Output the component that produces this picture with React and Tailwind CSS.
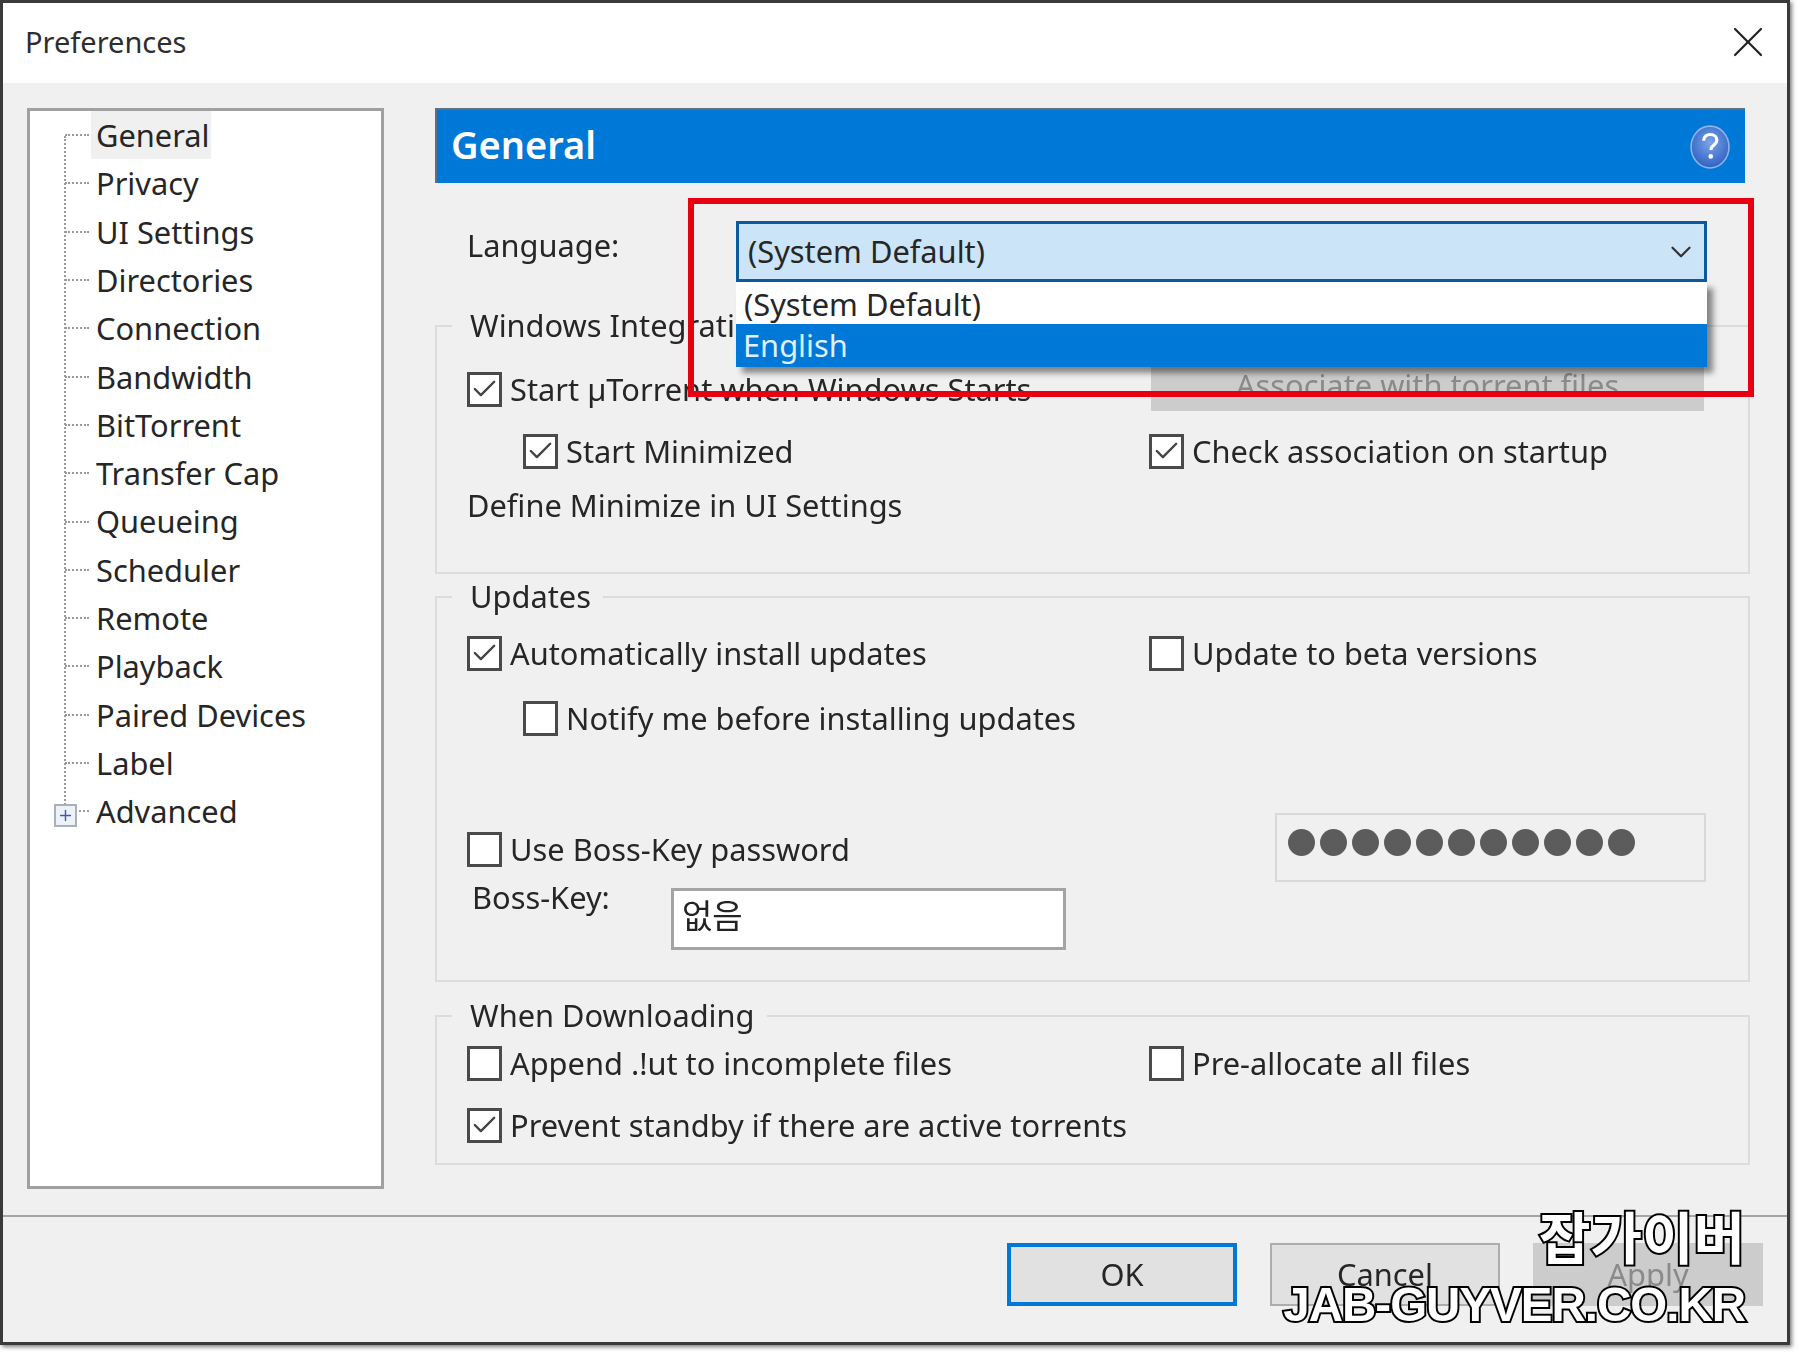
import React from 'react';
import { X, ChevronDown, Check, Plus } from 'lucide-react';

const treeItems = [
  'General', 'Privacy', 'UI Settings', 'Directories', 'Connection', 'Bandwidth', 'BitTorrent',
  'Transfer Cap', 'Queueing', 'Scheduler', 'Remote', 'Playback', 'Paired Devices', 'Label', 'Advanced',
];

const CheckBox = ({ checked }) => (
  <span className="flex w-[35px] h-[35px] shrink-0 items-center justify-center border-[3px] border-[#4a4a4a] bg-white">
    {checked && <Check size={30} strokeWidth={2} className="text-[#444]" />}
  </span>
);

const CheckRow = ({ checked, label, className = '' }) => (
  <div className={`flex items-center h-[34px] gap-[8px] ${className}`}>
    <CheckBox checked={checked} />
    <span className="whitespace-nowrap">{label}</span>
  </div>
);

const Group = ({ title, className, children }) => (
  <div className={`relative border-2 border-[#dcdcdc] ${className}`}>
    <span className="absolute left-[15px] -top-[22px] h-[40px] flex items-center bg-[#f0f0f0] pl-[18px] pr-[12px] whitespace-nowrap">
      {title}
    </span>
    {children}
  </div>
);

const Btn = ({ label, className = '' }) => (
  <div className={`flex items-center justify-center w-[230px] h-[63px] ${className}`}>{label}</div>
);

const HelpIcon = () => (
  <svg width="40" height="46" viewBox="0 0 38 44" preserveAspectRatio="none">
    <defs>
      <radialGradient id="helpBg" cx="50%" cy="40%" r="60%">
        <stop offset="0%" stopColor="#7ba4e8" />
        <stop offset="100%" stopColor="#2f62c4" />
      </radialGradient>
    </defs>
    <ellipse cx="19" cy="22" rx="18" ry="20" fill="url(#helpBg)" stroke="#8fb4ea" strokeWidth="1.5" />
    <path d="M13 16c0-4 3-6 6.5-6s6 2.4 6 5.4c0 3-2 4.2-3.6 5.4-1.4 1-2 2-2 4" fill="none" stroke="#fff" strokeWidth="3" />
    <circle cx="19.7" cy="31" r="2.2" fill="#fff" />
  </svg>
);

export default function App() {
  return (
    <div className="relative w-[1800px] h-[1355px] bg-white overflow-hidden font-['Noto_Sans','Noto_Sans_CJK_KR',sans-serif] text-[30.8px] text-[#262626]">
      <div className="w-[1790px] h-[1345px] border-[3px] border-[#3a3a3a] bg-[#f0f0f0] flex flex-col shadow-[2px_2px_4px_rgba(0,0,0,0.5)] blur-[0.7px]">
        {/* Title bar */}
        <div className="h-[80px] shrink-0 bg-white flex items-center justify-between pl-[22px] pr-[13px]">
          <span className="text-[29px] text-[#2e2e2e] -mt-[2px]">Preferences</span>
          <X size={52} strokeWidth={1} className="text-[#222] -mt-[2px]" />
        </div>

        {/* Body */}
        <div className="h-[1132px] shrink-0 flex pl-[24px] pt-[25px] gap-[51px]">
          {/* Tree */}
          <div className="relative w-[357px] h-[1081px] border-[3px] border-[#a0a0a0] bg-white">
            <div className="absolute left-[34px] top-[25px] h-[672px] border-l-2 border-dotted border-[#9a9a9a]" />
            {treeItems.map((item, i) => (
              <div key={item} className="flex items-center h-[48.3px] pl-[35px]">
                {item === 'Advanced' ? (
                  <span className="relative z-10 flex w-[23px] h-[23px] mt-[9px] -ml-[11px] mr-[2px] shrink-0 items-center justify-center border-2 border-[#a8b0bc] bg-[#eef2f8]">
                    <Plus size={17} strokeWidth={2} className="text-[#3a5ea8]" />
                  </span>
                ) : null}
                <span className={`border-t-2 border-dotted border-[#9a9a9a] ${item === 'Advanced' ? 'w-[10px]' : 'w-[24px]'}`} />
                <span className={`ml-[2px] pl-[5px] pr-[1px] h-[48px] flex items-center whitespace-nowrap ${i === 0 ? 'bg-[#f0f0f0]' : ''}`}>
                  {item}
                </span>
              </div>
            ))}
          </div>

          {/* Right panel */}
          <div className="w-[1315px] flex flex-col">
            <div className="h-[75px] w-[1310px] shrink-0 border-l-2 border-t-2 border-[#5f6f80] bg-[#0078d7] flex items-center justify-between pl-[14px] pr-[15px]">
              <span className="text-[38px] font-semibold text-white -mt-[4px]">General</span>
              <HelpIcon />
            </div>

            {/* Language */}
            <div className="relative z-10 mt-[38px] h-[61px] shrink-0 flex items-center pl-[32px]">
              <span className="w-[269px] -mt-[12px]">Language:</span>
              <div className="relative w-[971px] h-[61px] border-[3px] border-[#0a5a9c] bg-[#cce4f7] flex items-center justify-between pl-[9px] pr-[6px]">
                <span>(System Default)</span>
                <ChevronDown size={34} strokeWidth={1.6} className="text-[#333]" />
                {/* Open list */}
                <div className="absolute -left-[3px] top-[58px] w-[971px] shadow-[6px_6px_6px_rgba(0,0,0,0.45)]">
                  <div className="h-[42px] bg-white flex items-center pl-[8px] pt-[2px]">(System Default)</div>
                  <div className="h-[43px] bg-[#0078d7] flex items-center pl-[7px] text-[#dff0ff]">English</div>
                </div>
              </div>
            </div>

            <Group title="Windows Integration" className="mt-[43px] h-[249px] shrink-0 pl-[30px] pt-[45px]">
              <div className="flex items-center h-[34px]">
                <CheckRow checked label="Start µTorrent when Windows Starts" className="w-[684px] shrink-0" />
                <div className="w-[553px] h-[52px] -mt-[8px] bg-[#cccccc] text-[#8a8a8a] flex items-center justify-center">
                  Associate with torrent files
                </div>
              </div>
              <div className="flex mt-[28px]">
                <CheckRow checked label="Start Minimized" className="w-[682px] shrink-0 pl-[56px]" />
                <CheckRow checked label="Check association on startup" />
              </div>
              <div className="mt-[20px] h-[34px] flex items-center">Define Minimize in UI Settings</div>
            </Group>

            <Group title="Updates" className="mt-[22px] h-[386px] shrink-0 pl-[30px] pt-[38px]">
              <div className="flex">
                <CheckRow checked label="Automatically install updates" className="w-[682px] shrink-0" />
                <CheckRow label="Update to beta versions" />
              </div>
              <CheckRow label="Notify me before installing updates" className="mt-[31px] pl-[56px]" />
              <div className="flex items-center h-[34px] mt-[97px]">
                <CheckRow label="Use Boss-Key password" className="w-[808px] shrink-0" />
                <div className="w-[431px] h-[69px] -mt-[3px] shrink-0 border-2 border-[#d9d9d9] flex items-center gap-[5px] pl-[11px] pb-[10px]">
                  {Array.from({ length: 11 }).map((_, i) => (
                    <span key={i} className="w-[27px] h-[27px] rounded-full bg-[#5c5c5c]" />
                  ))}
                </div>
              </div>
              <div className="flex items-start mt-[22px] pl-[5px]">
                <span className="w-[199px] h-[34px] -mt-[8px] flex items-center">Boss-Key:</span>
                <div className="w-[395px] h-[62px] border-[3px] border-[#a4a4a4] bg-white flex items-center pl-[8px] pb-[6px] text-[33px] text-[#222]">
                  없음
                </div>
              </div>
            </Group>

            <Group title="When Downloading" className="mt-[33px] h-[150px] shrink-0 pl-[30px] pt-[29px]">
              <div className="flex">
                <CheckRow label="Append .!ut to incomplete files" className="w-[682px] shrink-0" />
                <CheckRow label="Pre-allocate all files" />
              </div>
              <CheckRow checked label="Prevent standby if there are active torrents" className="mt-[28px]" />
            </Group>
          </div>
        </div>

        {/* Footer */}
        <div className="flex-1 border-t-2 border-[#a6a6a6] flex justify-end gap-[33px] pt-[26px] pr-[24px]">
          <Btn label="OK" className="border-[4px] border-[#0078d7] bg-[#e1e1e1]" />
          <Btn label="Cancel" className="border-2 border-[#adadad] bg-[#e1e1e1]" />
          <Btn label="Apply" className="bg-[#cccccc] text-[#8a8a8a]" />
        </div>
      </div>

      {/* Red annotation box */}
      <div className="absolute left-[688px] top-[198px] w-[1066px] h-[199px] border-[6px] border-[#e60012] z-20" />

      {/* Site watermark */}
      <div className="absolute right-[55px] top-[1200px] z-30 flex flex-col items-end font-['Noto_Sans_CJK_KR',sans-serif] text-white font-bold [-webkit-text-stroke:4px_#000] [paint-order:stroke_fill]">
        <span className="text-[56px] leading-[70px]">잡가이버</span>
        <span className="text-[47.5px] leading-[70px] tracking-[-1px] font-['Liberation_Sans',sans-serif] whitespace-nowrap">JAB-GUYVER.CO.KR</span>
      </div>
    </div>
  );
}
